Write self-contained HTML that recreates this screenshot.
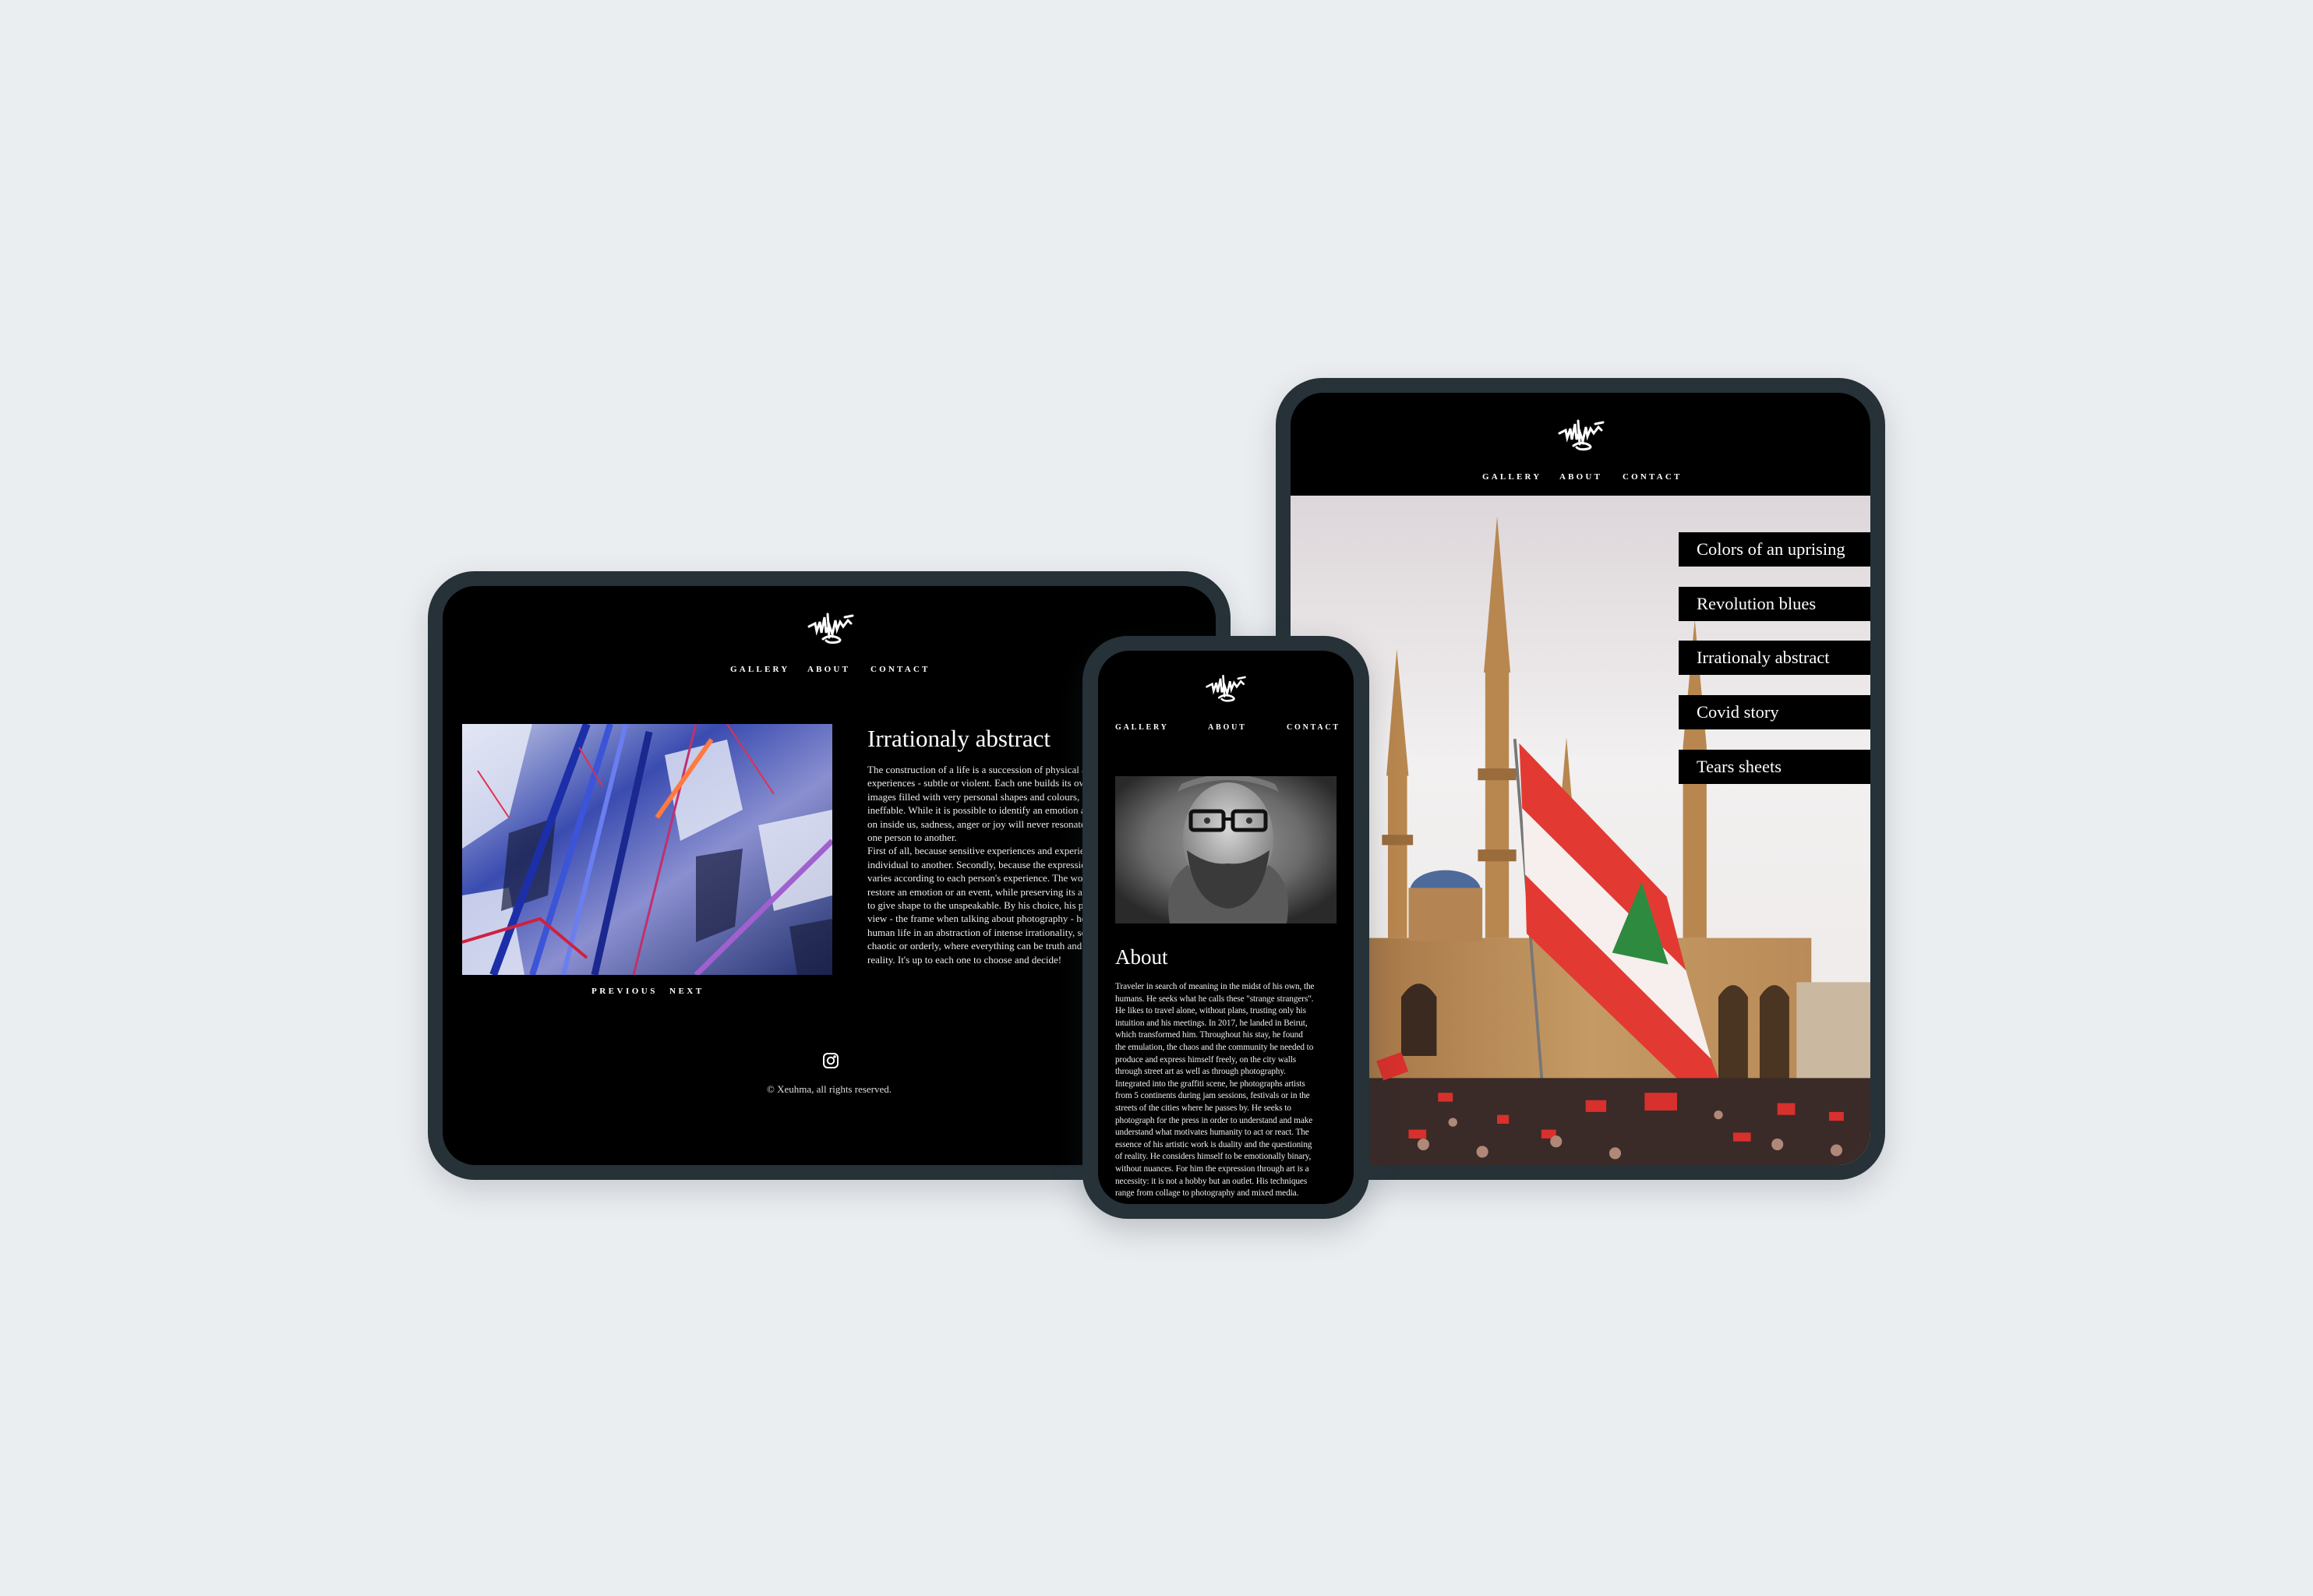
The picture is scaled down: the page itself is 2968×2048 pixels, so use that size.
<!DOCTYPE html>
<html><head><meta charset="utf-8">
<style>
*{margin:0;padding:0;box-sizing:border-box}
html,body{width:2968px;height:2048px;overflow:hidden;background:#ebeef1;font-family:"Liberation Serif",serif;color:#fff}
.abs{position:absolute}
.frame{position:absolute;background:#263238;box-shadow:0 14px 40px rgba(40,50,60,.18)}
.screen{position:absolute;background:#000;overflow:hidden}
.nav{position:absolute;font-size:11px;letter-spacing:3.2px;font-weight:bold;white-space:nowrap}
.p{position:absolute;white-space:nowrap;color:#eee}
.menu{position:absolute;left:2154px;width:246px;height:44px;background:#000;font-size:22.5px;line-height:44px;padding-left:23px;color:#fff;white-space:nowrap}
</style></head><body>

<!-- Landscape tablet -->
<div class="frame" style="left:549px;top:733px;width:1030px;height:781px;border-radius:60px"></div>
<div class="screen" style="left:568px;top:752px;width:992px;height:743px;border-radius:42px">
  <svg class="abs" style="left:466px;top:30px" width="64" height="48" viewBox="0 0 64 48" fill="none" stroke="#fff" stroke-width="3" stroke-linecap="round">
    <path d="M4 22 L12 18 L14 28 L18 16 L20 30 L24 10 L26 30 L30 20 L34 32 L38 14 L40 26 L44 16 L48 22 L54 14 L58 18"/>
    <path d="M22 38 Q30 32 40 36 Q48 40 40 42 Q30 44 26 40"/>
    <path d="M28 6 L30 36 M50 10 L60 8"/>
  </svg>
  <div class="nav" style="left:369px;top:101px">GALLERY</div>
  <div class="nav" style="left:468px;top:101px">ABOUT</div>
  <div class="nav" style="left:549px;top:101px">CONTACT</div>
  <svg class="abs" style="left:25px;top:177px" width="475" height="322" viewBox="0 0 475 322" preserveAspectRatio="none">
    <defs>
      <linearGradient id="ab" x1="0" y1="0" x2="1" y2="1">
        <stop offset="0" stop-color="#c8cde8"/><stop offset=".35" stop-color="#3a4cb0"/><stop offset=".6" stop-color="#8a8fd0"/><stop offset="1" stop-color="#22306e"/>
      </linearGradient>
    </defs>
    <rect width="475" height="322" fill="url(#ab)"/>
    <g fill="#e8ecf8" opacity=".8"><path d="M0 0 L90 0 L60 120 L0 160Z"/><path d="M260 40 L340 20 L360 110 L280 150Z"/><path d="M380 130 L475 110 L475 220 L400 240Z"/><path d="M0 220 L60 210 L80 322 L0 322Z"/></g>
    <g fill="#1a1f40" opacity=".7"><path d="M60 140 L120 120 L110 220 L50 240Z"/><path d="M300 170 L360 160 L350 260 L300 280Z"/><path d="M420 260 L475 250 L475 322 L430 322Z"/></g>
    <g fill="none">
      <path d="M40 322 L160 0" stroke="#1c2fa8" stroke-width="10"/>
      <path d="M90 322 L190 0" stroke="#3b54d8" stroke-width="8"/>
      <path d="M130 322 L210 0" stroke="#6a7ef0" stroke-width="6"/>
      <path d="M170 322 L240 10" stroke="#1a2890" stroke-width="9"/>
      <path d="M220 322 L300 0" stroke="#c03070" stroke-width="3"/>
      <path d="M250 120 L320 20" stroke="#ff7a40" stroke-width="6"/>
      <path d="M300 322 L475 150" stroke="#a060d0" stroke-width="7"/>
      <path d="M0 280 L100 250 L160 300" stroke="#d02040" stroke-width="4"/>
      <path d="M20 60 L60 120 M340 0 L400 90 M150 30 L180 80" stroke="#e03050" stroke-width="2"/>
    </g>
  </svg>
  <div class="nav" style="left:191px;top:514px;letter-spacing:3.5px">PREVIOUS</div>
  <div class="nav" style="left:291px;top:514px;letter-spacing:3.5px">NEXT</div>
  <div class="abs" style="left:545px;top:178px;font-size:31px;white-space:nowrap">Irrationaly abstract</div>
  <div class="p" style="left:545px;top:227px;font-size:13px;line-height:17.4px">
The construction of a life is a succession of physical and emotional<br>
experiences - subtle or violent. Each one builds its own collection of<br>
images filled with very personal shapes and colours, sometimes<br>
ineffable. While it is possible to identify an emotion as it is going<br>
on inside us, sadness, anger or joy will never resonate the same from<br>
one person to another.<br>
First of all, because sensitive experiences and experiences vary from one<br>
individual to another. Secondly, because the expression of these feelings<br>
varies according to each person's experience. The work of Xeuhma is to<br>
restore an emotion or an event, while preserving its authenticity, trying<br>
to give shape to the unspeakable. By his choice, his perspective, his point of<br>
view - the frame when talking about photography - he seeks to condense<br>
human life in an abstraction of intense irrationality, sometimes<br>
chaotic or orderly, where everything can be truth and nothing is<br>
reality. It's up to each one to choose and decide!
  </div>
  <svg class="abs" style="left:487px;top:598px" width="22" height="22" viewBox="0 0 22 22" fill="none" stroke="#fff" stroke-width="2">
    <rect x="2" y="2" width="18" height="18" rx="5"/><circle cx="11" cy="11" r="4.2"/><circle cx="16" cy="6" r=".8" fill="#fff"/>
  </svg>
  <div class="abs" style="left:0;width:992px;top:638px;text-align:center;font-size:13px;color:#ddd">© Xeuhma, all rights reserved.</div>
</div>

<!-- Portrait tablet -->
<div class="frame" style="left:1637px;top:485px;width:782px;height:1029px;border-radius:60px"></div>
<div class="screen" style="left:1656px;top:504px;width:744px;height:991px;border-radius:42px">
  <svg class="abs" style="left:341px;top:30px" width="64" height="48" viewBox="0 0 64 48" fill="none" stroke="#fff" stroke-width="3" stroke-linecap="round">
    <path d="M4 22 L12 18 L14 28 L18 16 L20 30 L24 10 L26 30 L30 20 L34 32 L38 14 L40 26 L44 16 L48 22 L54 14 L58 18"/>
    <path d="M22 38 Q30 32 40 36 Q48 40 40 42 Q30 44 26 40"/>
    <path d="M28 6 L30 36 M50 10 L60 8"/>
  </svg>
  <div class="nav" style="left:246px;top:102px">GALLERY</div>
  <div class="nav" style="left:345px;top:102px">ABOUT</div>
  <div class="nav" style="left:426px;top:102px">CONTACT</div>
  <svg class="abs" style="left:0;top:132px" width="744" height="859" viewBox="0 0 393 454" preserveAspectRatio="none">
    <defs>
      <linearGradient id="sky" x1="0" y1="0" x2="0" y2="1"><stop offset="0" stop-color="#ddd6da"/><stop offset=".4" stop-color="#f2f0f0"/><stop offset="1" stop-color="#ece8e6"/></linearGradient>
      <linearGradient id="stone" x1="0" y1="0" x2="1" y2="0"><stop offset="0" stop-color="#a77848"/><stop offset=".5" stop-color="#c59a64"/><stop offset="1" stop-color="#b98b58"/></linearGradient>
    </defs>
    <rect width="393" height="454" fill="url(#sky)"/>
    <rect x="53" y="300" width="300" height="110" fill="url(#stone)"/>
    <rect x="343" y="330" width="50" height="80" fill="#cbb8a0"/>
    <ellipse cx="105" cy="268" rx="24" ry="14" fill="#4d6a9a"/>
    <rect x="80" y="266" width="50" height="36" fill="#b48552"/>
    <path d="M75 340 q12 -18 24 0 v40 h-24z" fill="#3a2a20"/>
    <path d="M290 340 q10 -16 20 0 v60 h-20z M318 340 q10 -16 20 0 v60 h-20z" fill="#4a3422"/>
    <path d="M140 14 L131 120 L149 120Z M132 120 h16 v180 h-16z" fill="#b8874f"/>
    <rect x="127" y="185" width="26" height="8" fill="#9a6c3c"/><rect x="127" y="240" width="26" height="8" fill="#9a6c3c"/>
    <path d="M72 104 L65 190 L80 190Z M66 190 h13 v110 h-13z" fill="#b8874f"/>
    <rect x="62" y="230" width="21" height="7" fill="#9a6c3c"/>
    <path d="M274 84 L266 170 L282 170Z M266 170 h16 v130 h-16z" fill="#b8874f"/>
    <path d="M187 164 L183 210 L191 210Z" fill="#b8874f"/>
    <!-- flag -->
    <path d="M152 165 L171 405" stroke="#777" stroke-width="2"/>
    <path d="M155 168 L255 272 L268 322 L157 212Z" fill="#e23a32"/>
    <path d="M157 212 L268 322 L285 382 L159 257Z" fill="#f7eeee"/>
    <path d="M159 257 L285 382 L312 454 L290 454 L272 405 L160 297Z" fill="#e23a32"/>
    <path d="M238 262 L256 318 L218 310Z" fill="#2e8a3e"/>
    <!-- crowd -->
    <rect x="53" y="395" width="340" height="59" fill="#3a2a28"/>
    <g fill="#d8302c"><rect x="60" y="380" width="18" height="14" transform="rotate(-20 69 387)"/><rect x="100" y="405" width="10" height="6"/><rect x="200" y="410" width="14" height="8"/><rect x="240" y="405" width="22" height="12"/><rect x="330" y="412" width="12" height="8"/><rect x="140" y="420" width="8" height="6"/><rect x="365" y="418" width="10" height="6"/><rect x="80" y="430" width="12" height="6"/><rect x="170" y="430" width="10" height="6"/><rect x="300" y="432" width="12" height="6"/></g>
    <g fill="#b08878"><circle cx="90" cy="440" r="4"/><circle cx="130" cy="445" r="4"/><circle cx="180" cy="438" r="4"/><circle cx="220" cy="446" r="4"/><circle cx="330" cy="440" r="4"/><circle cx="370" cy="444" r="4"/><circle cx="110" cy="425" r="3"/><circle cx="290" cy="420" r="3"/></g>
  </svg>
  <div class="menu" style="left:498px;top:179px">Colors of an uprising</div>
  <div class="menu" style="left:498px;top:249px">Revolution blues</div>
  <div class="menu" style="left:498px;top:318px">Irrationaly abstract</div>
  <div class="menu" style="left:498px;top:388px">Covid story</div>
  <div class="menu" style="left:498px;top:458px">Tears sheets</div>
</div>

<!-- Phone -->
<div class="frame" style="left:1389px;top:816px;width:368px;height:748px;border-radius:58px;box-shadow:0 14px 40px rgba(40,50,60,.25)"></div>
<div class="screen" style="left:1409px;top:835px;width:328px;height:710px;border-radius:40px">
  <svg class="abs" style="left:136px;top:27px" width="56" height="42" viewBox="0 0 64 48" fill="none" stroke="#fff" stroke-width="3" stroke-linecap="round">
    <path d="M4 22 L12 18 L14 28 L18 16 L20 30 L24 10 L26 30 L30 20 L34 32 L38 14 L40 26 L44 16 L48 22 L54 14 L58 18"/>
    <path d="M22 38 Q30 32 40 36 Q48 40 40 42 Q30 44 26 40"/>
    <path d="M28 6 L30 36 M50 10 L60 8"/>
  </svg>
  <div class="nav" style="left:22px;top:93px;font-size:10px;letter-spacing:2.8px">GALLERY</div>
  <div class="nav" style="left:141px;top:93px;font-size:10px;letter-spacing:2.8px">ABOUT</div>
  <div class="nav" style="left:242px;top:93px;font-size:10px;letter-spacing:2.8px">CONTACT</div>
  <svg class="abs" style="left:22px;top:161px" width="284" height="189" viewBox="0 0 284 189" preserveAspectRatio="none">
    <defs>
      <radialGradient id="pg" cx=".5" cy=".45" r=".6"><stop offset="0" stop-color="#9a9a9a"/><stop offset=".6" stop-color="#6a6a6a"/><stop offset="1" stop-color="#2a2a2a"/></radialGradient>
      <radialGradient id="face" cx=".5" cy=".4" r=".5"><stop offset="0" stop-color="#d8d8d8"/><stop offset="1" stop-color="#8a8a8a"/></radialGradient>
    </defs>
    <rect width="284" height="189" fill="url(#pg)"/>
    <path d="M70 189 Q60 130 100 110 L190 110 Q230 130 220 189Z" fill="#5a5a5a"/>
    <ellipse cx="145" cy="80" rx="58" ry="72" fill="url(#face)"/>
    <path d="M80 20 Q145 -10 210 20 L205 10 Q145 -15 85 10Z" fill="#777"/>
    <path d="M92 95 Q100 165 145 170 Q190 165 198 95 Q170 115 145 112 Q120 115 92 95Z" fill="#3a3a3a"/>
    <rect x="97" y="45" width="42" height="24" rx="4" fill="none" stroke="#111" stroke-width="5"/>
    <rect x="151" y="45" width="42" height="24" rx="4" fill="none" stroke="#111" stroke-width="5"/>
    <path d="M139 55 h12" stroke="#111" stroke-width="4"/>
    <circle cx="118" cy="57" r="4" fill="#333"/><circle cx="172" cy="57" r="4" fill="#333"/>
  </svg>
  <div class="abs" style="left:22px;top:378px;font-size:27px;white-space:nowrap">About</div>
  <div class="p" style="left:22px;top:424px;font-size:11.3px;line-height:15.6px;letter-spacing:-.1px">
Traveler in search of meaning in the midst of his own, the<br>
humans. He seeks what he calls these "strange strangers".<br>
He likes to travel alone, without plans, trusting only his<br>
intuition and his meetings. In 2017, he landed in Beirut,<br>
which transformed him. Throughout his stay, he found<br>
the emulation, the chaos and the community he needed to<br>
produce and express himself freely, on the city walls<br>
through street art as well as through photography.<br>
Integrated into the graffiti scene, he photographs artists<br>
from 5 continents during jam sessions, festivals or in the<br>
streets of the cities where he passes by. He seeks to<br>
photograph for the press in order to understand and make<br>
understand what motivates humanity to act or react. The<br>
essence of his artistic work is duality and the questioning<br>
of reality. He considers himself to be emotionally binary,<br>
without nuances. For him the expression through art is a<br>
necessity: it is not a hobby but an outlet. His techniques<br>
range from collage to photography and mixed media.
  </div>
</div>
</body></html>
